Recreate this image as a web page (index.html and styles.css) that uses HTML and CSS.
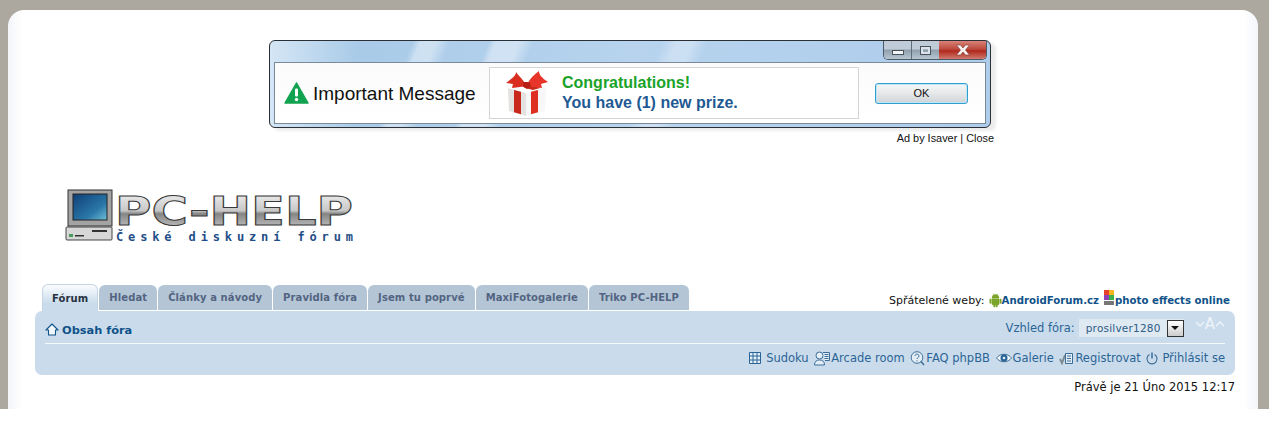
FILE: index.html
```html
<!DOCTYPE html>
<html lang="cs">
<head>
<meta charset="utf-8">
<title>PC-HELP</title>
<link rel="stylesheet" href="styles.css">
</head>
<body>
<div class="page">
  <div class="panel">
    <div class="ad">
      <div class="window">
        <div class="titlebar">
          <div class="winbtns">
            <span class="wb wb-min"><i class="glyph-min"></i></span>
            <span class="wb wb-max"><i class="glyph-max"></i></span>
            <span class="wb wb-close">
              <svg width="20" height="12" viewBox="0 0 20 12"><path d="M3.500 1h4l2.500 3 2.500-3h4L12.500 6l4 5h-4L10 8l-2.500 3h-4l4-5z" fill="#f6f0ee" stroke="#7a3a34" stroke-width=".6"/></svg>
            </span>
          </div>
        </div>
        <div class="winbody">
          <svg class="warn" width="25" height="22" viewBox="0 0 25 22"><path d="M12.500 1 24 21H1z" fill="#12a350" stroke="#12a350" stroke-width="1.500" stroke-linejoin="round"/><rect x="11" y="6.500" width="3" height="8" rx="1" fill="#fff"/><circle cx="12.500" cy="17.500" r="1.700" fill="#fff"/></svg>
          <span class="important">Important Message</span>
          <div class="prize">
            <svg class="gift" width="44" height="46" viewBox="0 0 44 46">
              <path d="M3 18l18 5v23L4 41z" fill="#e4e2e0"/>
              <path d="M41 18l-20 5v23l19-5z" fill="#f7f7f7"/>
              <path d="M3 18l19-4 19 4-20 5z" fill="#fff"/>
              <path d="M9 20l7 1.800v22.400L9 42.300z" fill="#c9281c"/>
              <path d="M26 21.800l7-1.800v22.300l-7 1.900z" fill="#dd3022"/>
              <path d="M14 14l7 1.500 7-1.500 7 4-7 2-8-2z" fill="#c92a1e"/>
              <path d="M21 15C17 8 12 4 11 2c0 4-5 7-10 11l7 1-1 4 8-1 6-1z" fill="#d92d20"/>
              <path d="M22 15c3-7 8-11 12-14 0 4 3 7 9 11l-7 2 1 4-9-1-6-1z" fill="#e8352a"/>
              <path d="M18.500 12h6l1.500 4-4 3-4-3z" fill="#b51f16"/>
            </svg>
            <div class="prize-text">
              <div class="congrats">Congratulations!</div>
              <div class="youhave">You have (1) new prize.</div>
            </div>
          </div>
          <span class="okbtn">OK</span>
        </div>
      </div>
      <div class="adby">Ad by Isaver | Close</div>
    </div>

    <div class="logo">
      <svg width="292" height="64" viewBox="0 0 292 64">
        <defs>
          <linearGradient id="steel" x1="0" y1="0" x2="0" y2="1">
            <stop offset="0" stop-color="#f5f5f5"/>
            <stop offset=".48" stop-color="#c8c8c8"/>
            <stop offset=".55" stop-color="#858585"/>
            <stop offset="1" stop-color="#d8d8d8"/>
          </linearGradient>
          <linearGradient id="screen" x1="0" y1="0" x2="1" y2="1">
            <stop offset="0" stop-color="#0f3f76"/>
            <stop offset=".65" stop-color="#2a77a8"/>
            <stop offset="1" stop-color="#6fc0d8"/>
          </linearGradient>
        </defs>
        <rect x="3" y="4" width="44" height="36" fill="#a3a3a3" stroke="#333"/>
        <rect x="8" y="8" width="34" height="26" fill="url(#screen)" stroke="#222"/>
        <rect x="1" y="41" width="46" height="13" rx="1" fill="#d7d7d7" stroke="#444"/>
        <rect x="27" y="44" width="15" height="2" fill="#333"/>
        <rect x="4" y="48" width="4" height="3" fill="#4a9a5a"/>
        <rect x="10" y="49" width="9" height="1.500" fill="#333"/>
        <text class="logo-title" x="50" y="39" textLength="238" lengthAdjust="spacingAndGlyphs" fill="url(#steel)" stroke="#3a3a3a" stroke-width="1">PC-HELP</text>
        <text class="logo-sub" x="51" y="55" textLength="237">České diskuzní fórum</text>
      </svg>
    </div>

    <div class="tabrow">
      <ul class="tabs">
        <li class="tab tab-active">Fórum</li>
        <li class="tab">Hledat</li>
        <li class="tab">Články a návody</li>
        <li class="tab">Pravidla fóra</li>
        <li class="tab">Jsem tu poprvé</li>
        <li class="tab">MaxiFotogalerie</li>
        <li class="tab">Triko PC-HELP</li>
      </ul>
      <div class="friends">
        <span>Spřátelené weby:</span>
        <svg width="13" height="15" viewBox="0 0 13 15"><path d="M3 5a3.500 3.500 0 0 1 7 0zM3 5.800h7v5.200a1 1 0 0 1-1 1H8.300v2H7v-2H6v2H4.700v-2H4a1 1 0 0 1-1-1zM.800 6h1.400v4.300H.800zM10.800 6h1.400v4.300h-1.400zM4 .500l1.200 1.800M9 .500 7.800 2.300" fill="#7ba52a" stroke="#7ba52a" stroke-width=".5"/></svg><a class="friend">AndroidForum.cz</a>
        <svg class="fotor" width="12" height="18" viewBox="0 0 12 18"><rect x="1" y="0" width="5" height="5" fill="#e8402a"/><rect x="6" y="0" width="5" height="5" fill="#f3b61f"/><rect x="1" y="5" width="5" height="5" fill="#8e3fb5"/><rect x="6" y="5" width="5" height="5" fill="#3cae4a"/><rect x="1" y="11" width="10" height="4" fill="#777"/></svg><a class="friend">photo effects online</a>
      </div>
    </div>

    <div class="navbar">
      <div class="nav-top">
        <div class="crumb">
          <svg width="14" height="13" viewBox="0 0 14 13"><path d="M7 1 1 7h2.500v5h7V7H13z" fill="#f2f7fb" stroke="#105289" stroke-width="1.100" stroke-linejoin="round"/></svg>
          <a>Obsah fóra</a>
        </div>
        <div class="style-switch">
          <span>Vzhled fóra:</span>
          <span class="select"><span class="select-val">prosilver1280</span><span class="select-btn"><i></i></span></span>
          <span class="fontsize">
            <svg width="10" height="6" viewBox="0 0 10 6"><path d="M1 1l4 4 4-4" fill="none" stroke="#eef4f9" stroke-width="1.300"/></svg>
            <span>A</span>
            <svg width="10" height="6" viewBox="0 0 10 6"><path d="M1 5l4-4 4 4" fill="none" stroke="#eef4f9" stroke-width="1.300"/></svg>
          </span>
        </div>
      </div>
      <div class="nav-links">
        <span class="navlink gap-sudoku">
          <svg width="12" height="12" viewBox="0 0 12 12"><path d="M.500.500h11v11H.500zM4 .500v11M8 .500v11M.500 4h11M.500 8h11" fill="#e4eef6" stroke="#2a6496"/></svg>
          <a>Sudoku</a>
        </span>
        <span class="navlink">
          <svg width="16" height="15" viewBox="0 0 16 15"><circle cx="5.500" cy="4.500" r="3.500" fill="#e4eef6" stroke="#3a6d98"/><path d="M.500 14c0-3.500 2-5 5-5s5 1.500 5 5z" fill="#e4eef6" stroke="#3a6d98"/><path d="M9 1.500h6.500v8H11" fill="#e4eef6" stroke="#3a6d98"/><path d="M10.500 3.500h4M10.500 5.500h4M10.500 7.500h4" stroke="#3a6d98"/></svg>
          <a>Arcade room</a>
        </span>
        <span class="navlink">
          <svg width="15" height="15" viewBox="0 0 15 15"><circle cx="7" cy="6.500" r="5.800" fill="#e4eef6" stroke="#3a6d98"/><path d="M11 10.500l3 3.500" stroke="#3a6d98" stroke-width="1.500"/><path d="M5 5c0-2.500 4-2.500 4 0 0 1.500-2 1.500-2 3M7 9.300v1.200" fill="none" stroke="#3a6d98"/></svg>
          <a>FAQ phpBB</a>
        </span>
        <span class="navlink">
          <svg width="16" height="12" viewBox="0 0 16 12"><path d="M.500 6C4 1 12 1 15.500 6 12 11 4 11 .500 6z" fill="#f2f7fb" stroke="#3a6d98"/><circle cx="8" cy="6" r="3.500" fill="#2a6496"/><circle cx="8" cy="6" r="1.300" fill="#e4eef6"/></svg>
          <a>Galerie</a>
        </span>
        <span class="navlink">
          <svg width="15" height="13" viewBox="0 0 15 13"><path d="M1 7l2 4 3-8" fill="none" stroke="#7e8a92" stroke-width="2"/><path d="M6.500 1.500h7v10h-7z" fill="#e4eef6" stroke="#3a6d98"/><path d="M8 4h4M8 6.500h4M8 9h4" stroke="#3a6d98"/></svg>
          <a>Registrovat</a>
        </span>
        <span class="navlink gap-power">
          <svg width="12" height="13" viewBox="0 0 12 13"><path d="M3.500 2.500a5 5 0 1 0 5 0" fill="none" stroke="#3a6d98" stroke-width="1.100"/><path d="M6 .500V6.500" stroke="#3a6d98" stroke-width="1.500"/></svg>
          <a>Přihlásit se</a>
        </span>
      </div>
    </div>
    <p class="now">Právě je 21 Úno 2015 12:17</p>
  </div>
</div>
</body>
</html>
```
FILE: styles.css
```css
* { box-sizing: border-box; }
html, body { margin: 0; padding: 0; background: #fff; }
body { font-family: "DejaVu Sans", Verdana, sans-serif; font-size: 11px; }
.page { height: 409px; overflow: hidden; background: #aca89f; padding: 10px 11px 0 8px; }
.panel {
  height: 420px;
  padding: 30px 23px 0 27px;
  background: linear-gradient(90deg, #f3f5fa 0, #fff 14px, #fff calc(100% - 14px), #f3f5fa 100%);
  border-radius: 16px 16px 0 0;
}

/* advert */
.ad { margin-left: 234px; width: 725px; }
.window {
  width: 722px; height: 88px;
  border: 1px solid #2b2f36;
  border-radius: 6px;
  background:
    linear-gradient(112deg, transparent 0 19%, rgba(255,255,255,.4) 20% 22%, transparent 24% 29%, rgba(255,255,255,.4) 30% 33%, transparent 35% 52%, rgba(255,255,255,.3) 54% 56%, transparent 58%),
    linear-gradient(90deg, #d5e6f5, #a9cbe8 12%, #b7d3ee 50%, #aecdeb 100%);
  box-shadow: 5px 3px 3px #ececec;
  padding: 0 4px 3px;
  display: flex; flex-direction: column;
}
.titlebar { height: 21px; display: flex; justify-content: flex-end; flex: none; }
.winbtns {
  display: flex; height: 19px; margin-right: -1px;
  border: 1px solid #4b5a66; border-top: 0;
  border-radius: 0 0 5px 5px; overflow: hidden;
}
.wb { display: flex; align-items: center; justify-content: center; height: 100%; }
.wb-min { width: 28px; background: linear-gradient(#bfcbd6 0 45%, #8f9eab 50%, #b7c6d3); border-right: 1px solid #5f6e7b; }
.wb-max { width: 27px; background: linear-gradient(#bfcbd6 0 45%, #8f9eab 50%, #b7c6d3); }
.wb-close { width: 47px; background: linear-gradient(#d98378, #bd4a3e 45%, #b1281d 55%, #cf7a6d); }
.glyph-min { width: 12px; height: 5px; margin-top: 5px; background: #f3f5f7; border: 1px solid #47525c; }
.glyph-max { width: 11px; height: 9px; border: 1px solid #47525c; box-shadow: inset 0 0 0 2px #dbe3ea; }
.winbody {
  flex: 1; min-height: 0;
  display: flex; align-items: center;
  background: linear-gradient(#fbfbfb, #fff);
  border: 1px solid #7b8a98;
  padding-left: 9px;
  font-family: "Liberation Sans", Arial, sans-serif;
}
.warn { flex: none; }
.important { font-size: 19px; color: #111; margin-left: 4px; width: 176px; white-space: nowrap; padding-top: 1px; }
.prize {
  width: 370px; height: 52px; flex: none;
  border: 1px solid #d5d5d5;
  display: flex; align-items: center;
  padding-left: 15px;
  background: #fff;
}
.gift { flex: none; }
.prize-text { margin-left: 13px; font-weight: bold; font-size: 16px; line-height: 20px; margin-top: -1px; }
.congrats { color: #1aa329; }
.youhave { color: #1f5a93; }
.okbtn {
  width: 93px; height: 21px; margin-left: 16px; flex: none;
  display: flex; align-items: center; justify-content: center;
  border: 1px solid #2f9fd0; border-radius: 3px;
  background: linear-gradient(#f4f6f7, #e6e8ea 50%, #cfd4d7);
  font-size: 11px; color: #111;
  box-shadow: inset 0 0 0 1px #bfe6f6;
}
.adby {
  margin-top: 3px; height: 14px;
  text-align: right;
  font: 10.900px/14px "Liberation Sans", Arial, sans-serif;
  color: #111;
}

/* logo */
.logo { margin: 41px 0 0 30px; height: 64px; }
.logo svg { display: block; }
.logo-title { font: bold 39px "DejaVu Sans", sans-serif; }
.logo-sub { font: bold 12px "DejaVu Sans Mono", "DejaVu Sans", monospace; fill: #1f4e87; }

/* tabs */
.tabrow { margin-top: 34px; display: flex; justify-content: space-between; align-items: flex-end; height: 27px; }
.tabs { list-style: none; margin: 0 0 0 7px; padding: 0; display: flex; gap: 1px; align-items: flex-start; }
.tab {
  height: 25px; padding: 0 10px; margin-top: 1px; margin-bottom: 1px;
  display: flex; align-items: center;
  background: #b4c6d6;
  border-radius: 6px 6px 0 0;
  color: #536482;
  font-weight: bold; font-size: 10px; letter-spacing: .1px;
  white-space: nowrap;
}
.tab-active {
  height: 27px; margin: 0; padding: 0 9px;
  background: linear-gradient(#fafcfe, #cadceb 70%);
  border: 1px solid #c5d5e3; border-bottom: 0;
  color: #28313f;
}
.friends {
  display: flex; align-items: flex-end;
  margin-right: 5px; padding-bottom: 3px;
  color: #111; font-size: 11px; line-height: 14px;
  white-space: nowrap;
}
.friends span { margin-right: 4px; }
.friend { color: #105289; font-weight: bold; font-size: 10.200px; }
.fotor { margin-left: 4px; }

/* nav bar */
.navbar {
  height: 64px;
  background: #cadceb;
  border-radius: 7px;
  padding: 0 10px;
  color: #105289;
}
.nav-top {
  height: 33px; padding-top: 5px;
  display: flex; justify-content: space-between; align-items: center;
  border-bottom: 1px solid #f5f9fc;
}
.crumb { display: flex; align-items: center; gap: 3px; font-weight: bold; font-size: 11.350px; color: #105289; }
.style-switch { display: flex; align-items: center; font-size: 11.500px; color: #2a6496; margin-top: -3px; }
.select { display: flex; align-items: center; margin-left: 4px; height: 18px; background: #dfe9f2; padding-left: 7px; font-size: 10.500px; color: #2d5c86; letter-spacing: .2px; }
.select-val { width: 81px; }
.select-btn { width: 17px; height: 17px; border: 1px solid #333; background: linear-gradient(#fff, #ccc); display: flex; align-items: center; justify-content: center; }
.select-btn i { border: 4px solid transparent; border-top: 4px solid #111; border-bottom: 0; }
.fontsize { display: flex; align-items: center; gap: 0; margin-left: 11px; margin-top: -9px; color: #eef4f9; font-size: 15px; line-height: 16px; }
.nav-links { height: 30px; padding-bottom: 2px; display: flex; justify-content: flex-end; align-items: center; gap: 5.600px; font-size: 11.500px; color: #2a6496; }
.navlink { display: flex; align-items: center; gap: 1px; }
.gap-sudoku { gap: 5px; }
.gap-power { gap: 4px; }
.now { margin: 6px 0 0; text-align: right; color: #111; font-size: 11.500px; line-height: 12px; }
```
